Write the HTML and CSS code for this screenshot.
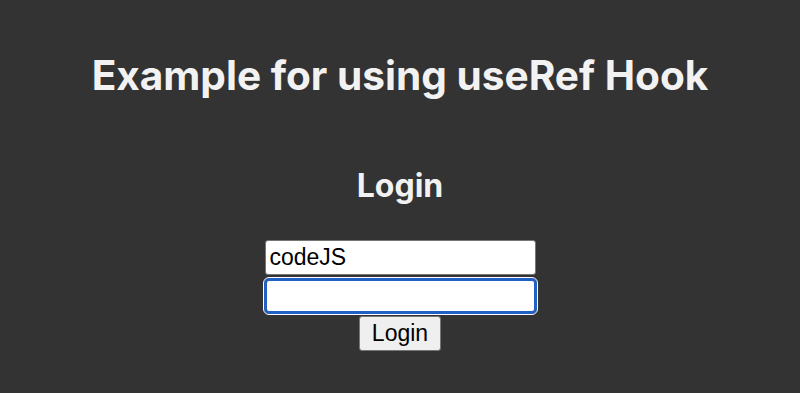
FILE: index.html
```html
<!DOCTYPE html>
<html lang="en">
<head>
    <meta charset="UTF-8">
    <meta name="viewport" content="width=device-width, initial-scale=1.0">
    <title>useRef Hook</title>
    <link rel="stylesheet" href="styles.css">
</head>
<body>
    <div class="app">
        <h1>Example for using useRef Hook</h1>

        <div class="login">
            <h2>Login</h2>
            <form class="login-form">
                <input type="text" class="field" value="codeJS">
                <input type="password" class="field focused">
                <button type="button" class="btn">Login</button>
            </form>
        </div>
    </div>
</body>
</html>
```

FILE: styles.css
```css
body {
    margin: 0;
    background: #333333;
    color: #f2f2f2;
    font-family: 'Inter', 'Roboto', sans-serif;
}
.app {
    text-align: center;
    padding-top: 52px;
}
h1 {
    font-size: 40.6px;
    font-weight: 700;
    margin: 0;
    line-height: 48px;
}
.login {
    margin-top: 66px;
}
h2 {
    font-size: 32px;
    font-weight: 700;
    margin: 0;
    line-height: 40px;
}
.login-form {
    margin-top: 34px;
    display: flex;
    flex-direction: column;
    align-items: center;
}
.field {
    width: 271px;
    height: 35px;
    box-sizing: border-box;
    font-family: 'Liberation Sans', Arial, sans-serif;
    font-size: 23px;
    padding: 2px 4px;
    border: 1px solid #767676;
    border-radius: 3px;
    background: white;
    color: black;
}
.focused {
    height: 36px;
    width: 273px;
    margin-top: 3px;
    border: 3px solid #2160c4;
    outline: 1.5px solid #ffffff;
    border-radius: 5px;
}
.btn {
    margin-top: 2px;
    font-family: 'Liberation Sans', Arial, sans-serif;
    font-size: 23px;
    padding: 2px 12px;
    height: 35px;
    background: #efefef;
    color: black;
    border: 1px solid #767676;
    border-radius: 3px;
}
```
